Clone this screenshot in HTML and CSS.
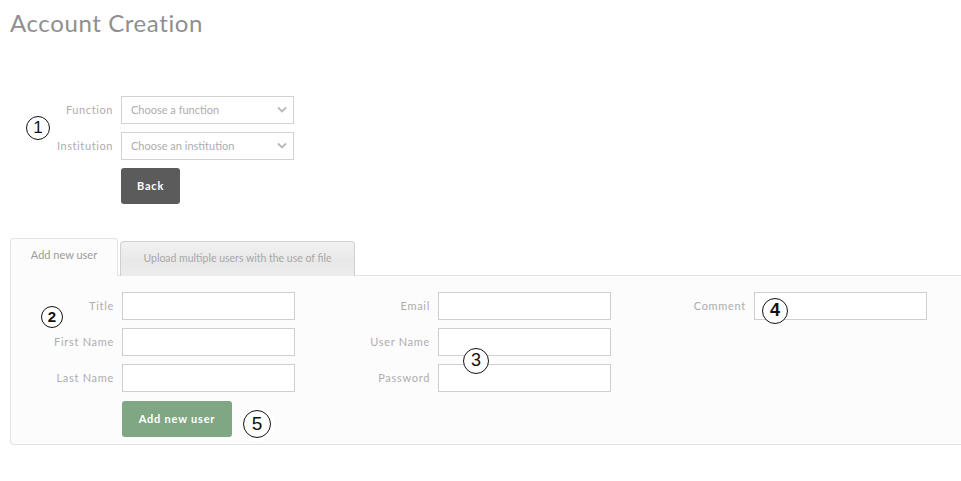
FILE: index.html
```html
<html>

<head>
  <title>Account Creation</title>
  <link rel="stylesheet" href="styles.css">
</head>

<body>

  <h1>Account Creation</h1>

  <section class="scope">
    <div class="row">
      <label>Function</label>
      <div class="select">
        <span>Choose a function</span>
        <svg width="10" height="7" viewBox="0 0 10 7"><path d="M1 1.5 L5 5.5 L9 1.5" fill="none" stroke="#b8b8b8" stroke-width="1.8"/></svg>
      </div>
    </div>
    <div class="row">
      <label>Institution</label>
      <div class="select">
        <span>Choose an institution</span>
        <svg width="10" height="7" viewBox="0 0 10 7"><path d="M1 1.5 L5 5.5 L9 1.5" fill="none" stroke="#b8b8b8" stroke-width="1.8"/></svg>
      </div>
    </div>
    <div class="row">
      <label></label>
      <button class="btn btn-dark">Back</button>
    </div>
  </section>

  <nav class="tabs">
    <a class="tab active">Add new user</a>
    <a class="tab">Upload multiple users with the use of file</a>
  </nav>

  <section class="panel">
    <div class="grid">
      <div class="field"><label>Title</label><input type="text"></div>
      <div class="field"><label>Email</label><input type="text"></div>
      <div class="field"><label>Comment</label><input type="text"></div>

      <div class="field"><label>First Name</label><input type="text"></div>
      <div class="field"><label>User Name</label><input type="text"></div>
      <div></div>

      <div class="field"><label>Last Name</label><input type="text"></div>
      <div class="field"><label>Password</label><input type="password"></div>
      <div></div>

      <div class="field"><label></label><button class="btn btn-green">Add new user</button></div>
    </div>
  </section>

  <!-- annotation marks -->
  <span class="mark m1">1</span>
  <span class="mark m2">2</span>
  <span class="mark m3">3</span>
  <span class="mark m4">4</span>
  <span class="mark m5">5</span>

</body>

</html>
```

FILE: styles.css
```css
body {
  margin: 0;
  padding: 0 0 0 10px;
  font-family: Lato, "Open Sans", sans-serif;
  background: #fff;
  overflow: hidden;
  position: relative;
  height: 100vh;
}

h1 {
  margin: 0;
  padding-top: 8px;
  font-size: 24px;
  font-weight: 400;
  line-height: 30px;
  color: #8f8f8f;
  letter-spacing: 0.6px;
}

.scope {
  margin-top: 58px;
  display: flex;
  flex-direction: column;
  gap: 8px;
}

.row {
  display: flex;
  align-items: center;
  gap: 8px;
}

.row label {
  width: 103px;
  padding-bottom: 2px;
  text-align: right;
  font-size: 11px;
  color: #adadad;
  letter-spacing: 0.6px;
}

.select {
  width: 173px;
  height: 28px;
  box-sizing: border-box;
  border: 1px solid #d2d2d2;
  background: #fff;
  display: flex;
  align-items: center;
  justify-content: space-between;
  padding: 0 6px 2px 9px;
  font-size: 11px;
  color: #adadad;
}

.btn {
  height: 36px;
  border: none;
  border-radius: 3px;
  color: #fff;
  font-family: inherit;
  font-size: 11px;
  font-weight: 700;
  letter-spacing: 0.8px;
  padding-bottom: 3px;
}

.btn-dark {
  width: 59px;
  background: #5b5b5b;
}

.btn-green {
  width: 110px;
  background: #80a783;
}

.tabs {
  margin-top: 34px;
  display: flex;
  align-items: flex-end;
  gap: 2px;
  height: 38px;
}

.tab {
  box-sizing: border-box;
  font-size: 11px;
  text-align: center;
  border: 1px solid #e3e3e3;
  border-bottom: none;
  border-radius: 4px 4px 0 0;
}

.tab.active {
  width: 108px;
  height: 38px;
  line-height: 32px;
  background: #fcfcfc;
  color: #9a9a9a;
  position: relative;
  z-index: 1;
}

.tab:not(.active) {
  width: 235px;
  height: 35px;
  line-height: 33px;
  font-size: 10.5px;
  border-color: #d0d0d0;
  background: linear-gradient(#f2f2f2, #e8e8e8 55%, #ececec);
  color: #a8a8a8;
}

.panel {
  box-sizing: border-box;
  margin-top: -1px;
  border: 1px solid #e3e3e3;
  border-right: none;
  border-radius: 0 0 0 4px;
  background: #fcfcfc;
  padding: 16px 0 7px;
}

.grid {
  display: grid;
  grid-template-columns: 316px 316px 316px;
  row-gap: 8px;
}

.grid .field:last-child {
  margin-top: 1px;
}

.field {
  display: flex;
  align-items: center;
  gap: 8px;
}

.field label {
  width: 103px;
  padding-bottom: 2px;
  text-align: right;
  font-size: 11px;
  color: #adadad;
  letter-spacing: 0.7px;
}

.field input {
  width: 173px;
  height: 28px;
  box-sizing: border-box;
  border: 1px solid #cfcfcf;
  background: #fff;
  margin: 0;
}

.mark {
  position: absolute;
  box-sizing: border-box;
  border: 1.6px solid #111;
  border-radius: 50%;
  background: #fff;
  color: #111;
  font-family: "Liberation Sans", sans-serif;
  text-align: center;
}

.m1 { left: 26px; top: 116px; width: 24px; height: 24px; line-height: 21px; font-size: 17px; }
.m2 { left: 41px; top: 306px; width: 22px; height: 22px; line-height: 19px; font-size: 15px; font-weight: 700; }
.m3 { left: 463px; top: 348px; width: 26px; height: 26px; line-height: 23px; font-size: 18px; }
.m4 { left: 762px; top: 298px; width: 26px; height: 26px; line-height: 23px; font-size: 18px; font-weight: 700; }
.m5 { left: 243px; top: 410px; width: 28px; height: 28px; line-height: 25px; font-size: 19px; box-shadow: 0 0 0 3px #fff; }
```
